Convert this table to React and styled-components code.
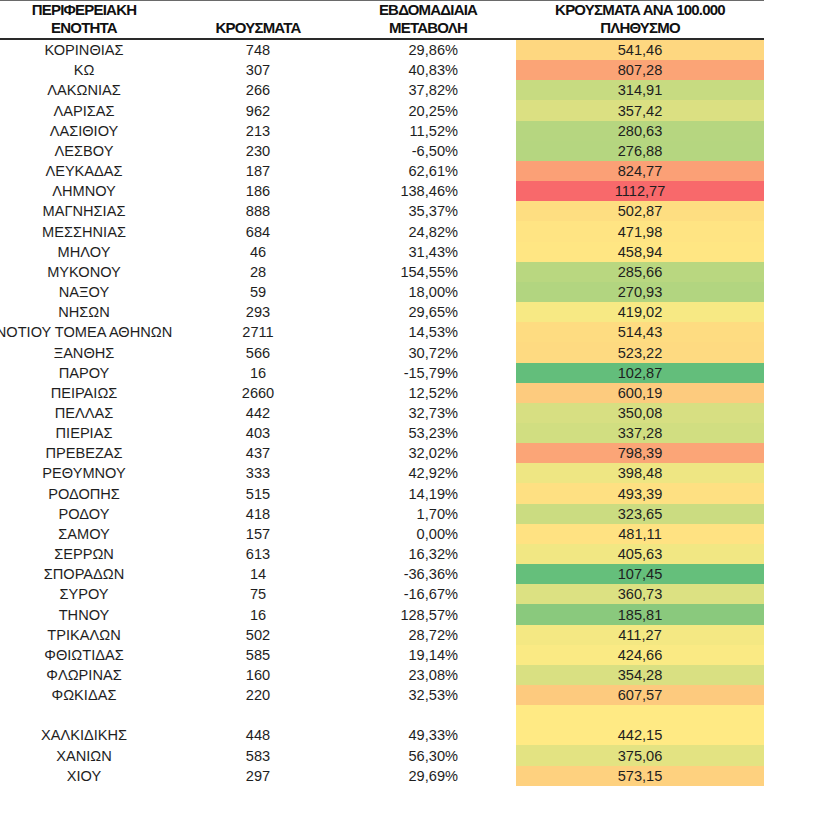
import React from "react";
import styled, { createGlobalStyle } from "styled-components";

const GlobalStyle = createGlobalStyle`
  body {
    margin: 0;
    background: #ffffff;
    font-family: "Liberation Sans", Arial, sans-serif;
  }
`;

const COLUMNS = "168px 180px 168px 248px";
const ROW_HEIGHT = 20.16;

const Sheet = styled.div`
  width: 764px;
  display: flex;
  flex-direction: column;
  color: #1e1e1e;
`;

const HeaderRow = styled.div`
  display: grid;
  grid-template-columns: ${COLUMNS};
  height: 37px;
  border-top: 1px solid #6a6a6a;
  border-bottom: 2px solid #2a2a2a;
`;

const HeaderCell = styled.div`
  display: flex;
  align-items: flex-end;
  justify-content: center;
  text-align: center;
  padding-right: ${(p) => p.$shift || 0}px;
  padding-bottom: 1px;
  font-family: "Liberation Sans", Arial, sans-serif;
  font-weight: 700;
  font-size: 15px;
  letter-spacing: -0.8px;
  line-height: 18px;
  color: #111;
`;

const Row = styled.div`
  display: grid;
  grid-template-columns: ${COLUMNS};
  height: ${(p) => (p.$tall ? ROW_HEIGHT * 2 : ROW_HEIGHT)}px;
  align-items: end;
  font-size: 14.6px;
`;

const Cell = styled.div`
  height: 100%;
  display: flex;
  align-items: flex-end;
  justify-content: ${(p) => (p.$right ? "flex-end" : "center")};
  padding-right: ${(p) => (p.$right ? 58 : 0)}px;
  padding-bottom: 1px;
  box-sizing: border-box;
  white-space: nowrap;
  line-height: 18px;
`;

const ScaleCell = styled(Cell)`
  background: ${(p) => p.$bg};
`;

const rows = [
  ["ΚΟΡΙΝΘΙΑΣ", "748", "29,86%", 541.46],
  ["ΚΩ", "307", "40,83%", 807.28],
  ["ΛΑΚΩΝΙΑΣ", "266", "37,82%", 314.91],
  ["ΛΑΡΙΣΑΣ", "962", "20,25%", 357.42],
  ["ΛΑΣΙΘΙΟΥ", "213", "11,52%", 280.63],
  ["ΛΕΣΒΟΥ", "230", "-6,50%", 276.88],
  ["ΛΕΥΚΑΔΑΣ", "187", "62,61%", 824.77],
  ["ΛΗΜΝΟΥ", "186", "138,46%", 1112.77],
  ["ΜΑΓΝΗΣΙΑΣ", "888", "35,37%", 502.87],
  ["ΜΕΣΣΗΝΙΑΣ", "684", "24,82%", 471.98],
  ["ΜΗΛΟΥ", "46", "31,43%", 458.94],
  ["ΜΥΚΟΝΟΥ", "28", "154,55%", 285.66],
  ["ΝΑΞΟΥ", "59", "18,00%", 270.93],
  ["ΝΗΣΩΝ", "293", "29,65%", 419.02],
  ["ΝΟΤΙΟΥ ΤΟΜΕΑ ΑΘΗΝΩΝ", "2711", "14,53%", 514.43],
  ["ΞΑΝΘΗΣ", "566", "30,72%", 523.22],
  ["ΠΑΡΟΥ", "16", "-15,79%", 102.87],
  ["ΠΕΙΡΑΙΩΣ", "2660", "12,52%", 600.19],
  ["ΠΕΛΛΑΣ", "442", "32,73%", 350.08],
  ["ΠΙΕΡΙΑΣ", "403", "53,23%", 337.28],
  ["ΠΡΕΒΕΖΑΣ", "437", "32,02%", 798.39],
  ["ΡΕΘΥΜΝΟΥ", "333", "42,92%", 398.48],
  ["ΡΟΔΟΠΗΣ", "515", "14,19%", 493.39],
  ["ΡΟΔΟΥ", "418", "1,70%", 323.65],
  ["ΣΑΜΟΥ", "157", "0,00%", 481.11],
  ["ΣΕΡΡΩΝ", "613", "16,32%", 405.63],
  ["ΣΠΟΡΑΔΩΝ", "14", "-36,36%", 107.45],
  ["ΣΥΡΟΥ", "75", "-16,67%", 360.73],
  ["ΤΗΝΟΥ", "16", "128,57%", 185.81],
  ["ΤΡΙΚΑΛΩΝ", "502", "28,72%", 411.27],
  ["ΦΘΙΩΤΙΔΑΣ", "585", "19,14%", 424.66],
  ["ΦΛΩΡΙΝΑΣ", "160", "23,08%", 354.28],
  ["ΦΩΚΙΔΑΣ", "220", "32,53%", 607.57],
  ["ΧΑΛΚΙΔΙΚΗΣ", "448", "49,33%", 442.15, true],
  ["ΧΑΝΙΩΝ", "583", "56,30%", 375.06],
  ["ΧΙΟΥ", "297", "29,69%", 573.15],
];

// three colour scale: green -> yellow -> red
const MIN = 102.87;
const MID = 435;
const MAX = 1112.77;
const GREEN = [99, 190, 123];
const YELLOW = [255, 235, 132];
const RED = [248, 105, 107];

const mix = (a, b, t) => a.map((v, i) => Math.round(v + (b[i] - v) * t));

function scaleColor(v) {
  const c =
    v <= MID
      ? mix(GREEN, YELLOW, (v - MIN) / (MID - MIN))
      : mix(YELLOW, RED, (v - MID) / (MAX - MID));
  return `rgb(${c[0]}, ${c[1]}, ${c[2]})`;
}

const fmt = (v) => v.toFixed(2).replace(".", ",");

export default function App() {
  return (
    <>
      <GlobalStyle />
      <Sheet>
        <HeaderRow>
          <HeaderCell>
            ΠΕΡΙΦΕΡΕΙΑΚΗ
            <br />
            ΕΝΟΤΗΤΑ
          </HeaderCell>
          <HeaderCell>ΚΡΟΥΣΜΑΤΑ</HeaderCell>
          <HeaderCell $shift={8}>
            ΕΒΔΟΜΑΔΙΑΙΑ
            <br />
            ΜΕΤΑΒΟΛΗ
          </HeaderCell>
          <HeaderCell>
            ΚΡΟΥΣΜΑΤΑ ΑΝΑ 100.000
            <br />
            ΠΛΗΘΥΣΜΟ
          </HeaderCell>
        </HeaderRow>
        {rows.map(([name, cases, change, rate, tall]) => (
          <Row key={name} $tall={tall}>
            <Cell>{name}</Cell>
            <Cell>{cases}</Cell>
            <Cell $right>{change}</Cell>
            <ScaleCell $bg={scaleColor(rate)}>{fmt(rate)}</ScaleCell>
          </Row>
        ))}
      </Sheet>
    </>
  );
}
